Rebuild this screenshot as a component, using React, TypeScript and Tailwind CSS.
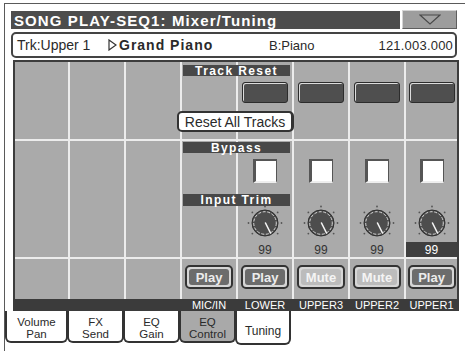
import React from 'react';

type Track = { name: string; play: boolean; selected?: boolean };

// columns 5..8 of the mixer grid
const tracks: Track[] = [
  { name: 'LOWER', play: true },
  { name: 'UPPER3', play: false },
  { name: 'UPPER2', play: false },
  { name: 'UPPER1', play: true, selected: true },
];

const colStart = ['col-start-1', 'col-start-2', 'col-start-3', 'col-start-4', 'col-start-5', 'col-start-6', 'col-start-7', 'col-start-8'];
const rowStart = ['row-start-1', 'row-start-2', 'row-start-3'];

const tabs = [
  { top: 'Volume', bottom: 'Pan', w: 'w-[63px]', active: false },
  { top: 'FX', bottom: 'Send', w: 'w-[57px]', active: false },
  { top: 'EQ', bottom: 'Gain', w: 'w-[57px]', active: false },
  { top: 'EQ', bottom: 'Control', w: 'w-[57px]', active: true },
];

const Knob: React.FC = () => {
  const dots = [-90, -140, -40, 180, 0, 140, 40].map(a => {
    const r = (a * Math.PI) / 180;
    return { x: 19 + 16.5 * Math.cos(r), y: 19 + 16.5 * Math.sin(r) };
  });
  return (
    <svg width="38" height="38" viewBox="0 0 38 38" className="mt-[21px]">
      {dots.map((d, i) => (
        <circle key={i} cx={d.x} cy={d.y} r="0.9" fill="#555" />
      ))}
      <circle cx="19" cy="19" r="13" fill="#4d4d4d" stroke="#2e2e2e" strokeWidth="1" />
      <circle cx="19" cy="19" r="11.3" fill="none" stroke="#e6e6e6" strokeWidth="0.9" strokeDasharray="3 1.6" />
      <line x1="19.5" y1="19" x2="24.5" y2="29" stroke="#f2f2f2" strokeWidth="1.6" strokeLinecap="round" />
    </svg>
  );
};

const PlayButton: React.FC<{ play: boolean }> = ({ play }) => (
  <div className="mt-[6px] w-[48px] h-[24px] rounded-[5px] border-2 border-[#333] bg-[#d6d6d6] p-[2px]">
    <div
      className={`h-full rounded-[3px] flex items-center justify-center text-[13px] font-bold leading-none ${
        play ? 'bg-[#6c6c6c] text-[#ececec]' : 'bg-[#bcbcbc] text-[#f4f4f4]'
      }`}
    >
      {play ? 'Play' : 'Mute'}
    </div>
  </div>
);

const labelCls =
  'col-start-4 col-span-2 relative z-10 self-start ml-px mr-[2px] bg-[#484848] text-white text-[12px] font-bold tracking-[1.4px] leading-none flex items-center justify-center';

const App: React.FC = () => {
  return (
    <div className="w-[465px] h-[351px] bg-white pl-[4px] pt-[3px] overflow-hidden font-['Liberation_Sans',Arial,sans-serif] text-[#2a2a2a]">
      <div className="h-full border-t border-l border-[#5a5a5a] pl-[6px] pt-[7px]">
        {/* title bar */}
        <div className="flex w-[446px] h-[18px] gap-[2px]">
          <div className="flex-1 bg-[#4d4d4d] text-white font-bold text-[15px] tracking-[1.1px] leading-none flex items-center pl-[3px]">
            SONG PLAY-SEQ1: Mixer/Tuning
          </div>
          <div className="w-[55px] -mt-px bg-[#9d9d9d] border-t border-l border-[#d4d4d4] border-b border-r border-b-[#5e5e5e] border-r-[#5e5e5e] flex items-center justify-center">
            <svg width="22" height="11" viewBox="0 0 22 11">
              <polygon points="1,1 21,1 11,10" fill="#a3a3a3" stroke="#4a4a4a" strokeWidth="1.2" />
            </svg>
          </div>
        </div>

        {/* track info */}
        <div className="mt-[3px] w-[446px] h-[26px] rounded-[5px] border-2 border-[#444] bg-white flex items-center text-[14px] leading-none pl-[4px] pr-[2px]">
          <span className="w-[91px]">Trk:Upper 1</span>
          <svg width="9" height="12" viewBox="0 0 9 12" className="mr-[2px]">
            <polygon points="1,1 8,6 1,11" fill="none" stroke="#333" strokeWidth="1.2" />
          </svg>
          <span className="w-[150px] font-bold tracking-[1px]">Grand Piano</span>
          <span className="flex-1 text-[13px]">B:Piano</span>
          <span className="text-[13px] tracking-[0.2px]">121.003.000</span>
        </div>

        {/* mixer grid */}
        <div className="mt-[2px] ml-[2px] w-[446px] border-2 border-b-0 border-[#3d3d3d]">
          <div className="grid grid-cols-[53px_repeat(6,54px)_51px] grid-rows-[77px_116px_40px] gap-[2px] bg-[#ececec]">
            {[0, 1, 2].map(r =>
              [0, 1, 2, 3, 4, 5, 6, 7].map(c => {
                const t = c >= 4 ? tracks[c - 4] : null;
                return (
                  <div key={`${r}-${c}`} className={`${rowStart[r]} ${colStart[c]} bg-[#aaaaaa] flex flex-col items-center`}>
                    {r === 0 && t && (
                      <div className="mt-[20px] w-[46px] h-[21px] rounded-[3px] border border-[#2c2c2c] bg-[#4f4f4f] shadow-[inset_1px_1px_0_#dcdcdc]" />
                    )}
                    {r === 1 && t && (
                      <>
                        <div className="mt-[18px] w-[24px] h-[24px] bg-white border-l-[3px] border-t-2 border-r border-[#555] border-b-2 border-b-[#eeeeee]" />
                        <Knob />
                        <div
                          className={`mt-auto self-stretch h-[15px] flex items-center justify-center text-[12px] leading-none ${
                            t.selected ? 'bg-[#3f3f3f] text-white' : 'text-[#333]'
                          }`}
                        >
                          99
                        </div>
                      </>
                    )}
                    {r === 2 && c >= 3 && <PlayButton play={t ? t.play : true} />}
                  </div>
                );
              })
            )}

            <div className={`${labelCls} row-start-1 mt-[3px] h-[11px]`}>Track Reset</div>
            <div className="col-start-4 col-span-2 row-start-1 relative z-10 self-start mt-[49px] -ml-[5px] -mr-[2px] h-[21px] rounded-[5px] border-2 border-[#333] border-r-[3px] bg-white flex items-center justify-center text-[14px] leading-none">
              Reset All Tracks
            </div>
            <div className={`${labelCls} row-start-2 mt-[1px] h-[11px]`}>Bypass</div>
            <div className={`${labelCls} row-start-2 mt-[53px] h-[12px]`}>Input Trim</div>
          </div>
        </div>

        {/* channel names */}
        <div className="ml-[2px] w-[446px] h-[12px] bg-[#3b3b3b] px-[2px] grid grid-cols-[53px_repeat(6,54px)_51px] gap-[2px] text-white text-[11px] leading-[12px] text-center">
          <span />
          <span />
          <span />
          <span>MIC/IN</span>
          {tracks.map(t => (
            <span key={t.name}>{t.name}</span>
          ))}
        </div>

        {/* page tabs */}
        <div className="-ml-[6px] flex items-start">
          {tabs.map((tab, i) => (
            <div
              key={tab.bottom}
              className={`${tab.w} ${i > 0 ? '-ml-px' : ''} h-[32px] border-2 border-t-0 border-[#333] rounded-b-[6px] text-center text-[11.5px] leading-[12px] pt-[5px] ${
                tab.active ? 'bg-[#a9a9a9]' : 'bg-white'
              }`}
            >
              <div>{tab.top}</div>
              <div>{tab.bottom}</div>
            </div>
          ))}
          <div className="w-[56px] -ml-px h-[34px] border-2 border-t-0 border-[#333] rounded-b-[6px] bg-white text-center text-[12px] leading-none pt-[14px]">
            Tuning
          </div>
        </div>
      </div>
    </div>
  );
};

export default App;
